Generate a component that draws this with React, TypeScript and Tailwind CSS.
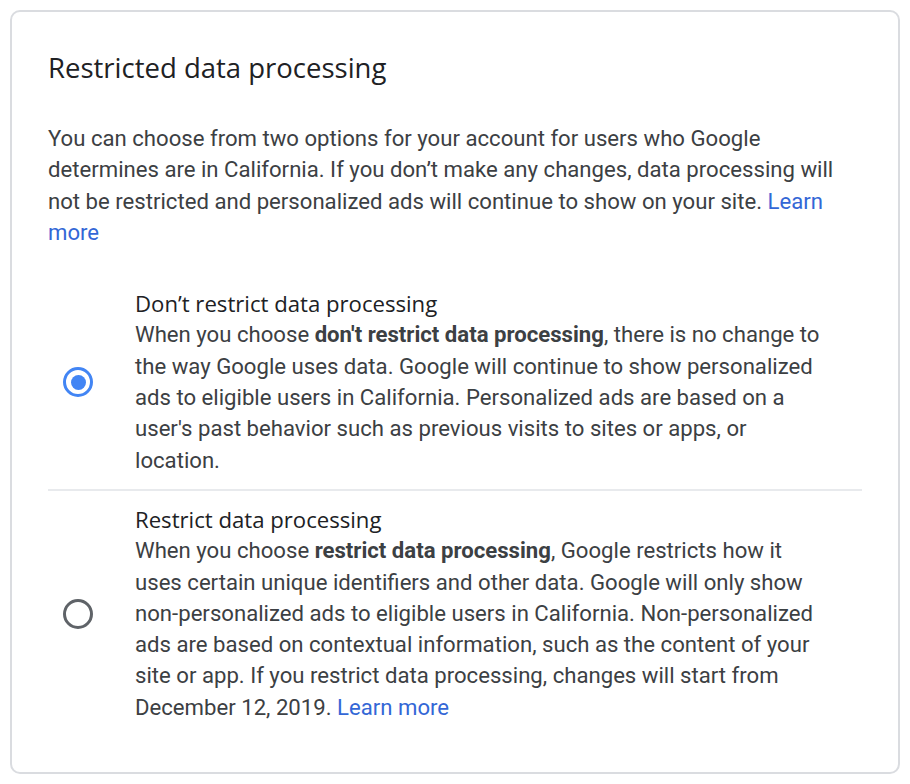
import React from "react";

function Radio({ checked }: { checked: boolean }) {
  return checked ? (
    <div className="w-[30px] h-[30px] rounded-full border-[3px] border-[#4285f4] flex items-center justify-center">
      <div className="w-[15px] h-[15px] rounded-full bg-[#4285f4]" />
    </div>
  ) : (
    <div className="w-[30px] h-[30px] rounded-full border-[3px] border-[#5f6368]" />
  );
}

export default function App() {
  return (
    <div className="w-[910px] h-[784px] bg-white p-[10px]" style={{ fontFamily: "Roboto, sans-serif" }}>
      <div className="h-full border-2 border-[#dadce0] rounded-[10px] pl-[36px] pr-[36px] pt-[40px]">
        <h1 className="text-[27.5px] leading-[32px] text-[#202124]" style={{ fontFamily: "'Open Sans', sans-serif" }}>
          Restricted data processing
        </h1>
        <p className="mt-[39px] text-[22.15px] leading-[31.3px] text-[#3c4043]">
          You can choose from two options for your account for users who Google determines are in California. If you don’t make any changes, data processing will not be restricted and personalized ads will continue to show on your site.{" "}
          <a className="text-[#3367d6]">Learn more</a>
        </p>
        <div className="mt-[40px]">
          <div className="flex items-center pb-[13px] border-b-2 border-[#e8eaed]">
            <div className="w-[87px] shrink-0 flex pl-[15px]">
              <Radio checked />
            </div>
            <div className="text-[22.15px] leading-[31.3px] text-[#3c4043] pr-[32px]">
              <div className="text-[#202124] font-medium" style={{ fontFamily: "'Open Sans', sans-serif" }}>
                Don’t restrict data processing
              </div>
              <div>
                When you choose <b className="font-bold">don't restrict data processing</b>, there is no change to the way Google uses data. Google will continue to show personalized ads to eligible users in California. Personalized ads are based on a user's past behavior such as previous visits to sites or apps, or location.
              </div>
            </div>
          </div>
          <div className="flex items-center pt-[13px]">
            <div className="w-[87px] shrink-0 flex pl-[15px]">
              <Radio checked={false} />
            </div>
            <div className="text-[22.15px] leading-[31.3px] text-[#3c4043] pr-[32px]">
              <div className="text-[#202124] font-medium" style={{ fontFamily: "'Open Sans', sans-serif" }}>
                Restrict data processing
              </div>
              <div>
                When you choose <b className="font-bold">restrict data processing</b>, Google restricts how it uses certain unique identifiers and other data. Google will only show non-personalized ads to eligible users in California. Non-personalized ads are based on contextual information, such as the content of your site or app. If you restrict data processing, changes will start from December 12, 2019.{" "}
                <a className="text-[#3367d6]">Learn more</a>
              </div>
            </div>
          </div>
        </div>
      </div>
    </div>
  );
}
